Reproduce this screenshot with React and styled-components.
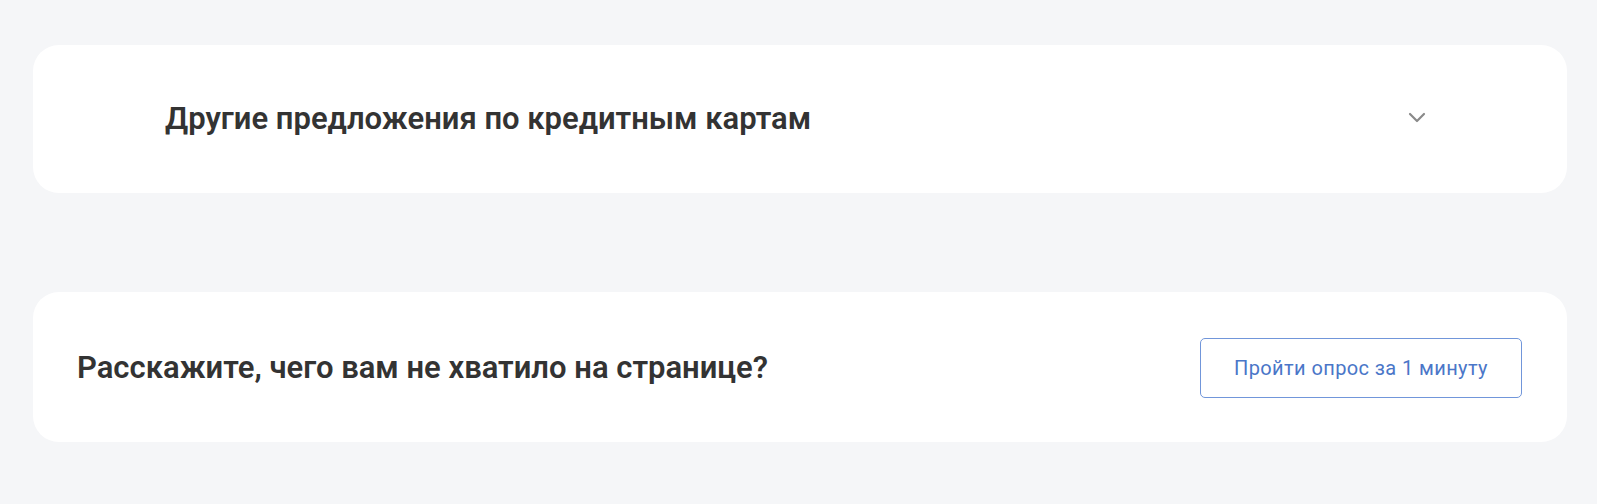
import styled, { createGlobalStyle } from "styled-components";

const GlobalStyle = createGlobalStyle`
  html, body {
    margin: 0;
    padding: 0;
    background: #f5f6f8;
    overflow: hidden;
  }
  body {
    font-family: Roboto, "Liberation Sans", Arial, sans-serif;
    color: #333333;
  }
`;

function Chevron() {
  return (
    <svg width="18" height="11" viewBox="0 0 18 11" fill="none">
      <path d="M2 2l7 7 7-7" stroke="#8a8a8a" strokeWidth="2.2" strokeLinecap="round" strokeLinejoin="round" />
    </svg>
  );
}

function App() {
  return (
    <Page>
      <GlobalStyle />
      <Card $height={148}>
        <AccordionHead>
          <Title>Другие предложения по кредитным картам</Title>
          <Toggle>
            <Chevron />
          </Toggle>
        </AccordionHead>
      </Card>

      <Card $height={150}>
        <SurveyRow>
          <Title>Расскажите, чего вам не хватило на странице?</Title>
          <OutlineButton>Пройти опрос за 1 минуту</OutlineButton>
        </SurveyRow>
      </Card>
    </Page>
  );
}

export default App;

const Page = styled.main`
  display: flex;
  flex-direction: column;
  gap: 99px;
  padding: 45px 30px 0 33px;
`;

const Card = styled.section`
  background: #ffffff;
  border-radius: 26px;
  height: ${(p) => p.$height}px;
  display: flex;
  align-items: center;
`;

const AccordionHead = styled.div`
  flex: 1;
  display: flex;
  align-items: center;
  justify-content: space-between;
  padding: 0 141px 0 132px;
  cursor: pointer;
`;

const Title = styled.h2`
  margin: 0;
  font-size: 31px;
  font-weight: 600;
  line-height: 40px;
  letter-spacing: 0;
  color: #333333;
`;

const Toggle = styled.span`
  display: flex;
  align-items: center;
  padding-bottom: 4px;
`;

const SurveyRow = styled.div`
  flex: 1;
  display: flex;
  align-items: center;
  justify-content: space-between;
  padding: 2px 45px 0 44px;
`;

const OutlineButton = styled.button`
  width: 322px;
  height: 60px;
  border: 1.5px solid #7196da;
  border-radius: 5px;
  background: #ffffff;
  color: #4a76c8;
  font-family: Roboto, "Liberation Sans", Arial, sans-serif;
  font-size: 20px;
  font-weight: 400;
  letter-spacing: 0.4px;
  cursor: pointer;
`;
